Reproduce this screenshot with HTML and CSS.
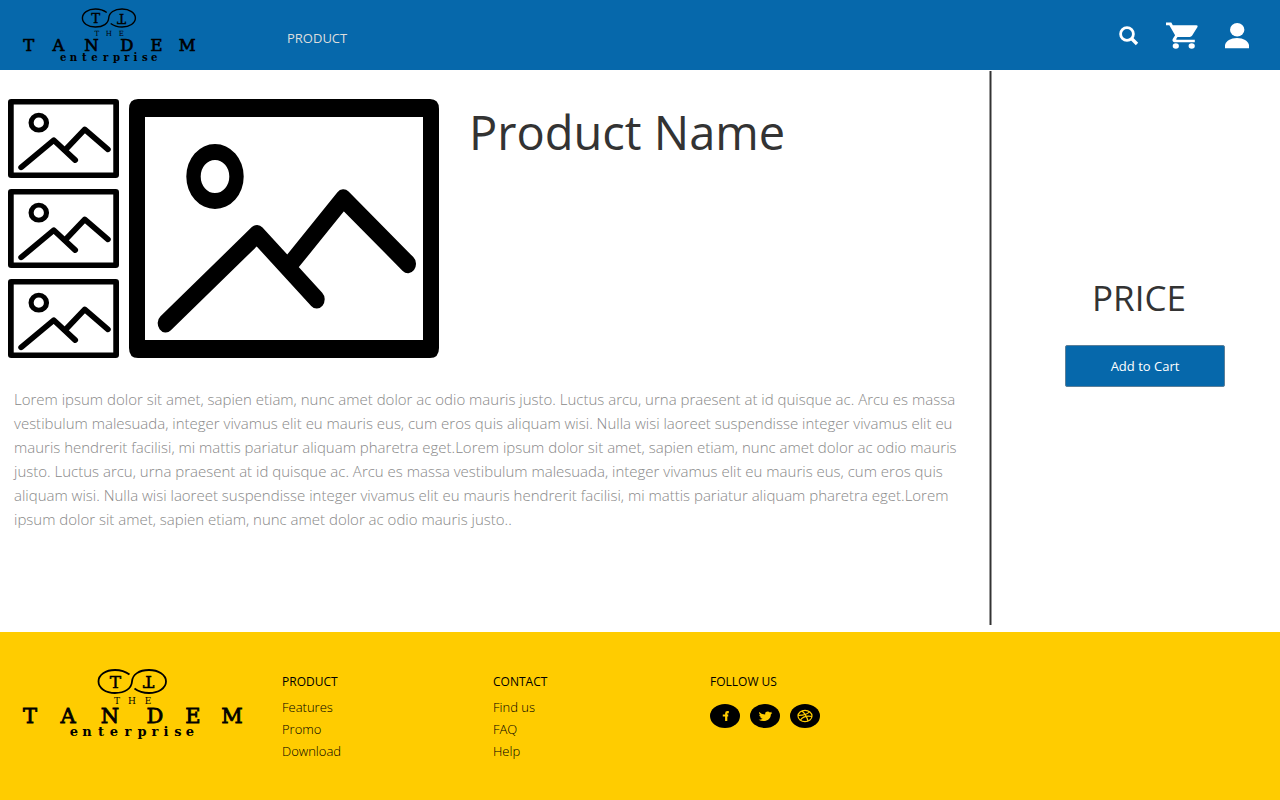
FILE: index.html
```html
<!DOCTYPE html>
<html lang="en">
<head>
<meta charset="utf-8">
<meta name="viewport" content="width=device-width, initial-scale=1">
<title>Product Name – The Tandem Enterprise</title>
<link rel="stylesheet" href="styles.css">
</head>
<body>
<svg class="defs" aria-hidden="true">
  <symbol id="logo" viewBox="0 0 228 72" overflow="visible">
    <path d="M110.500 5.500C106.500 2.500 101.500 1 96 1C86.500 1 79.500 6 79.500 12.500S86.500 24 96 24C106 24 112.500 19.500 113 12.500C113.500 5.500 120 1 130 1C139.500 1 147 6 147 12.500S139.500 24 130 24C124.500 24 119.500 22.500 115.500 19.500" fill="none" stroke="currentColor" stroke-width="1.800"/>
    <text class="logo-letter" x="96.500" y="18.500">T</text>
    <text class="logo-letter" x="-129.500" y="-7" transform="rotate(180)">T</text>
    <text class="logo-the" x="98 113 129" y="35">THE</text>
    <text class="logo-tandem" x="11 49 91 136 174 213" y="54">TANDEM</text>
    <text class="logo-enterprise" x="55 68 82 95 109 123 136 147 159 171" y="67">enterprise</text>
  </symbol>
  <symbol id="picture" viewBox="0 0 310 259" preserveAspectRatio="none">
    <path fill-rule="evenodd" d="M9 0H301Q310 0 310 10V249Q310 259 301 259H9Q0 259 0 249V10Q0 0 9 0ZM16 18V241H294V18Z"/>
    <path fill-rule="evenodd" d="M57.300 77.500a28.700 32.500 0 1 0 57.400 0a28.700 32.500 0 1 0-57.400 0ZM71.700 77.500a14.300 16.500 0 1 1 28.600 0a14.300 16.500 0 1 1-28.600 0Z"/>
    <g transform="scale(1 1.150)" fill="none" stroke="#000" stroke-width="16" stroke-linecap="round" stroke-linejoin="round">
      <path d="M36.700 195L128 117.500L187.700 174.200M161 144L214.300 86.500L279 143.500"/>
    </g>
  </symbol>
</svg>

<header class="topbar">
  <a class="brand" href="#" aria-label="The Tandem Enterprise"><svg class="brand-logo"><use href="#logo"/></svg></a>
  <nav class="nav"><a href="#">PRODUCT</a></nav>
  <div class="actions">
    <button type="button" aria-label="Search">
      <svg width="20" height="20" viewBox="0 0 20 20"><circle cx="8" cy="8" r="6.400" fill="none" stroke="#fff" stroke-width="2.800"/><path d="M12.500 12.500L18 18" stroke="#fff" stroke-width="3.400"/></svg>
    </button>
    <button type="button" aria-label="Cart">
      <svg width="32" height="28" viewBox="0 0 32 28"><path fill="#fff" d="M0 .5H5.300L6.800 3.200H30.500Q32.300 3.400 31.500 5L26 13.800Q25.200 14.900 23.800 14.900H11.500L10.200 17.100Q10 17.700 10.800 17.700H28.800V20.300H9.500C6.500 20.300 5.900 18.200 7 16.500L9.100 13.300L3.300 3.200H0Z"/><ellipse cx="9.800" cy="24" rx="3.100" ry="2.700" fill="#fff"/><ellipse cx="25.700" cy="24" rx="3.100" ry="2.700" fill="#fff"/></svg>
    </button>
    <button type="button" aria-label="Account">
      <svg width="24" height="26" viewBox="0 0 24 26"><ellipse cx="12.200" cy="6.800" rx="7.200" ry="6.700" fill="#fff"/><path fill="#fff" d="M0 25.300V22C1 18 5.500 15 12 15S23 18 24 22V25.300Z"/></svg>
    </button>
  </div>
</header>

<main class="page">
  <section class="product">
    <div class="overview">
      <div class="gallery">
        <div class="thumbs">
          <svg class="thumb" role="img" aria-label="Thumbnail 1"><use href="#picture"/></svg>
          <svg class="thumb" role="img" aria-label="Thumbnail 2"><use href="#picture"/></svg>
          <svg class="thumb" role="img" aria-label="Thumbnail 3"><use href="#picture"/></svg>
        </div>
        <svg class="photo" role="img" aria-label="Product"><use href="#picture"/></svg>
      </div>
      <h1>Product Name</h1>
    </div>
    <p class="description">Lorem ipsum dolor sit amet, sapien etiam, nunc amet dolor ac odio mauris justo. Luctus arcu, urna praesent at id quisque ac. Arcu es massa vestibulum malesuada, integer vivamus elit eu mauris eus, cum eros quis aliquam wisi. Nulla wisi laoreet suspendisse integer vivamus elit eu mauris hendrerit facilisi, mi mattis pariatur aliquam pharetra eget.Lorem ipsum dolor sit amet, sapien etiam, nunc amet dolor ac odio mauris justo. Luctus arcu, urna praesent at id quisque ac. Arcu es massa vestibulum malesuada, integer vivamus elit eu mauris eus, cum eros quis aliquam wisi. Nulla wisi laoreet suspendisse integer vivamus elit eu mauris hendrerit facilisi, mi mattis pariatur aliquam pharetra eget.Lorem ipsum dolor sit amet, sapien etiam, nunc amet dolor ac odio mauris justo..</p>
  </section>
  <aside class="purchase">
    <p class="price">PRICE</p>
    <button class="add" type="button">Add to Cart</button>
  </aside>
</main>

<footer class="footer">
  <a class="footer-brand" href="#" aria-label="The Tandem Enterprise"><svg class="footer-logo"><use href="#logo"/></svg></a>
  <section>
    <h2>PRODUCT</h2>
    <ul><li><a href="#">Features</a></li><li><a href="#">Promo</a></li><li><a href="#">Download</a></li></ul>
  </section>
  <section>
    <h2>CONTACT</h2>
    <ul><li><a href="#">Find us</a></li><li><a href="#">FAQ</a></li><li><a href="#">Help</a></li></ul>
  </section>
  <section>
    <h2>FOLLOW US</h2>
    <div class="social">
      <a href="#" aria-label="Facebook"><svg width="30" height="24" viewBox="0 0 30 24"><ellipse cx="15" cy="12" rx="15" ry="12"/><path d="M18.800 8.200H17.500Q16.200 8.200 16.200 9.500V17M12.800 11.500H18.200" fill="none" stroke="#fc0" stroke-width="2.200"/></svg></a>
      <a href="#" aria-label="Twitter"><svg width="30" height="24" viewBox="0 0 30 24"><ellipse cx="15" cy="12" rx="15" ry="12"/><path fill="#fc0" d="M9.200 8Q12 10.500 15.200 10.600C14.800 8.700 16.200 7.600 17.800 7.600Q19 7.600 19.900 8.400L22 7.800L21 9.300L22.300 9.100L20.800 10.500C20.900 14.200 17.800 17 13.600 17Q10.800 17 8.600 15.700Q11 15.800 12.600 14.700Q10.800 14.500 10.100 13.200H11.300Q9.300 12.500 9.100 10.800L10.300 11Q8.600 9.600 9.200 8Z"/></svg></a>
      <a href="#" aria-label="Dribbble"><svg width="30" height="24" viewBox="0 0 30 24"><ellipse cx="15" cy="12" rx="15" ry="12"/><g fill="none" stroke="#fc0" stroke-width="1.200"><ellipse cx="15" cy="12" rx="7" ry="5.700"/><path d="M12 7Q16.500 11 18 17M8.200 11.300Q16 11.500 19.500 7.800M10.500 16Q14 11 22 12.500"/></g></svg></a>
    </div>
  </section>
</footer>
</body>
</html>
```
FILE: styles.css
```css
* { box-sizing: border-box; }

body {
  margin: 0;
  min-height: 100vh;
  display: flex;
  flex-direction: column;
  background: #fff;
  color: #333;
  font-family: "Open Sans", "Noto Sans", sans-serif;
}

a { color: inherit; text-decoration: none; }
button { font: inherit; cursor: pointer; }
svg { display: block; overflow: visible; }
h1, h2, p, ul { margin: 0; padding: 0; font-weight: 400; }
ul { list-style: none; }

.defs { position: absolute; width: 0; height: 0; }

.logo-letter, .logo-the, .logo-tandem, .logo-enterprise {
  font-family: "DejaVu Serif", serif;
  text-anchor: middle;
  fill: currentColor;
}
.logo-letter { font-size: 17px; stroke: currentColor; stroke-width: 0.5px; }
.logo-the { font-size: 9px; }
.logo-tandem { font-size: 21px; stroke: currentColor; stroke-width: 0.8px; }
.logo-enterprise { font-size: 13px; font-weight: 700; }

.topbar {
  display: flex;
  align-items: center;
  height: 70px;
  padding: 0 31px 0 20px;
  background: #0668ab;
}
.brand { margin-top: 2px; color: #000; }
.brand-logo { width: 179px; height: 57px; }
.nav { margin: 6px 0 0 88px; font-size: 13px; line-height: 20px; color: #ddd; }
.actions { display: flex; align-items: center; gap: 27px; margin: 2px 0 0 auto; }
.actions button { padding: 0; border: 0; background: none; }

.page { flex: 1; display: flex; }
.product { flex: 1; padding: 29px 12px 20px 8px; }
.overview { display: flex; gap: 26px; }
.gallery { display: flex; gap: 10px; height: 259px; }
.thumbs { display: flex; flex-direction: column; justify-content: space-between; }
.thumb { width: 111px; height: 79px; }
.photo { width: 310px; height: 259px; }
h1 { padding-left: 4px; font-size: 47px; line-height: 67px; }
.description {
  margin: 29px 0 0 6px;
  font-size: 15px;
  font-weight: 300;
  line-height: 24px;
  color: #888;
}

.purchase {
  width: 291px;
  margin: 1px 0 7px;
  padding: 200px 55px 0 76px;
  box-shadow: inset 1px 0 #999, inset 2px 0 #333, inset 3px 0 #999;
}
.price { padding-left: 27px; font-size: 35px; line-height: 54px; }
.add {
  width: 100%;
  height: 42px;
  margin-top: 20px;
  border: 1px solid #5b7f99;
  border-radius: 2px;
  background: #0668ab;
  color: #fff;
  font-size: 13px;
}

.footer {
  display: grid;
  grid-template-columns: 263px 211px 217px 1fr;
  min-height: 168px;
  padding: 37px 19px 30px;
  background: #fc0;
  color: #000;
}
.footer-logo { width: 228px; height: 72px; }
h2 { margin: 2px 0 3px; font-size: 12px; line-height: 22px; }
.footer ul { font-size: 13px; font-weight: 300; line-height: 22px; }
.social { display: flex; gap: 10px; padding-top: 8px; }
```
